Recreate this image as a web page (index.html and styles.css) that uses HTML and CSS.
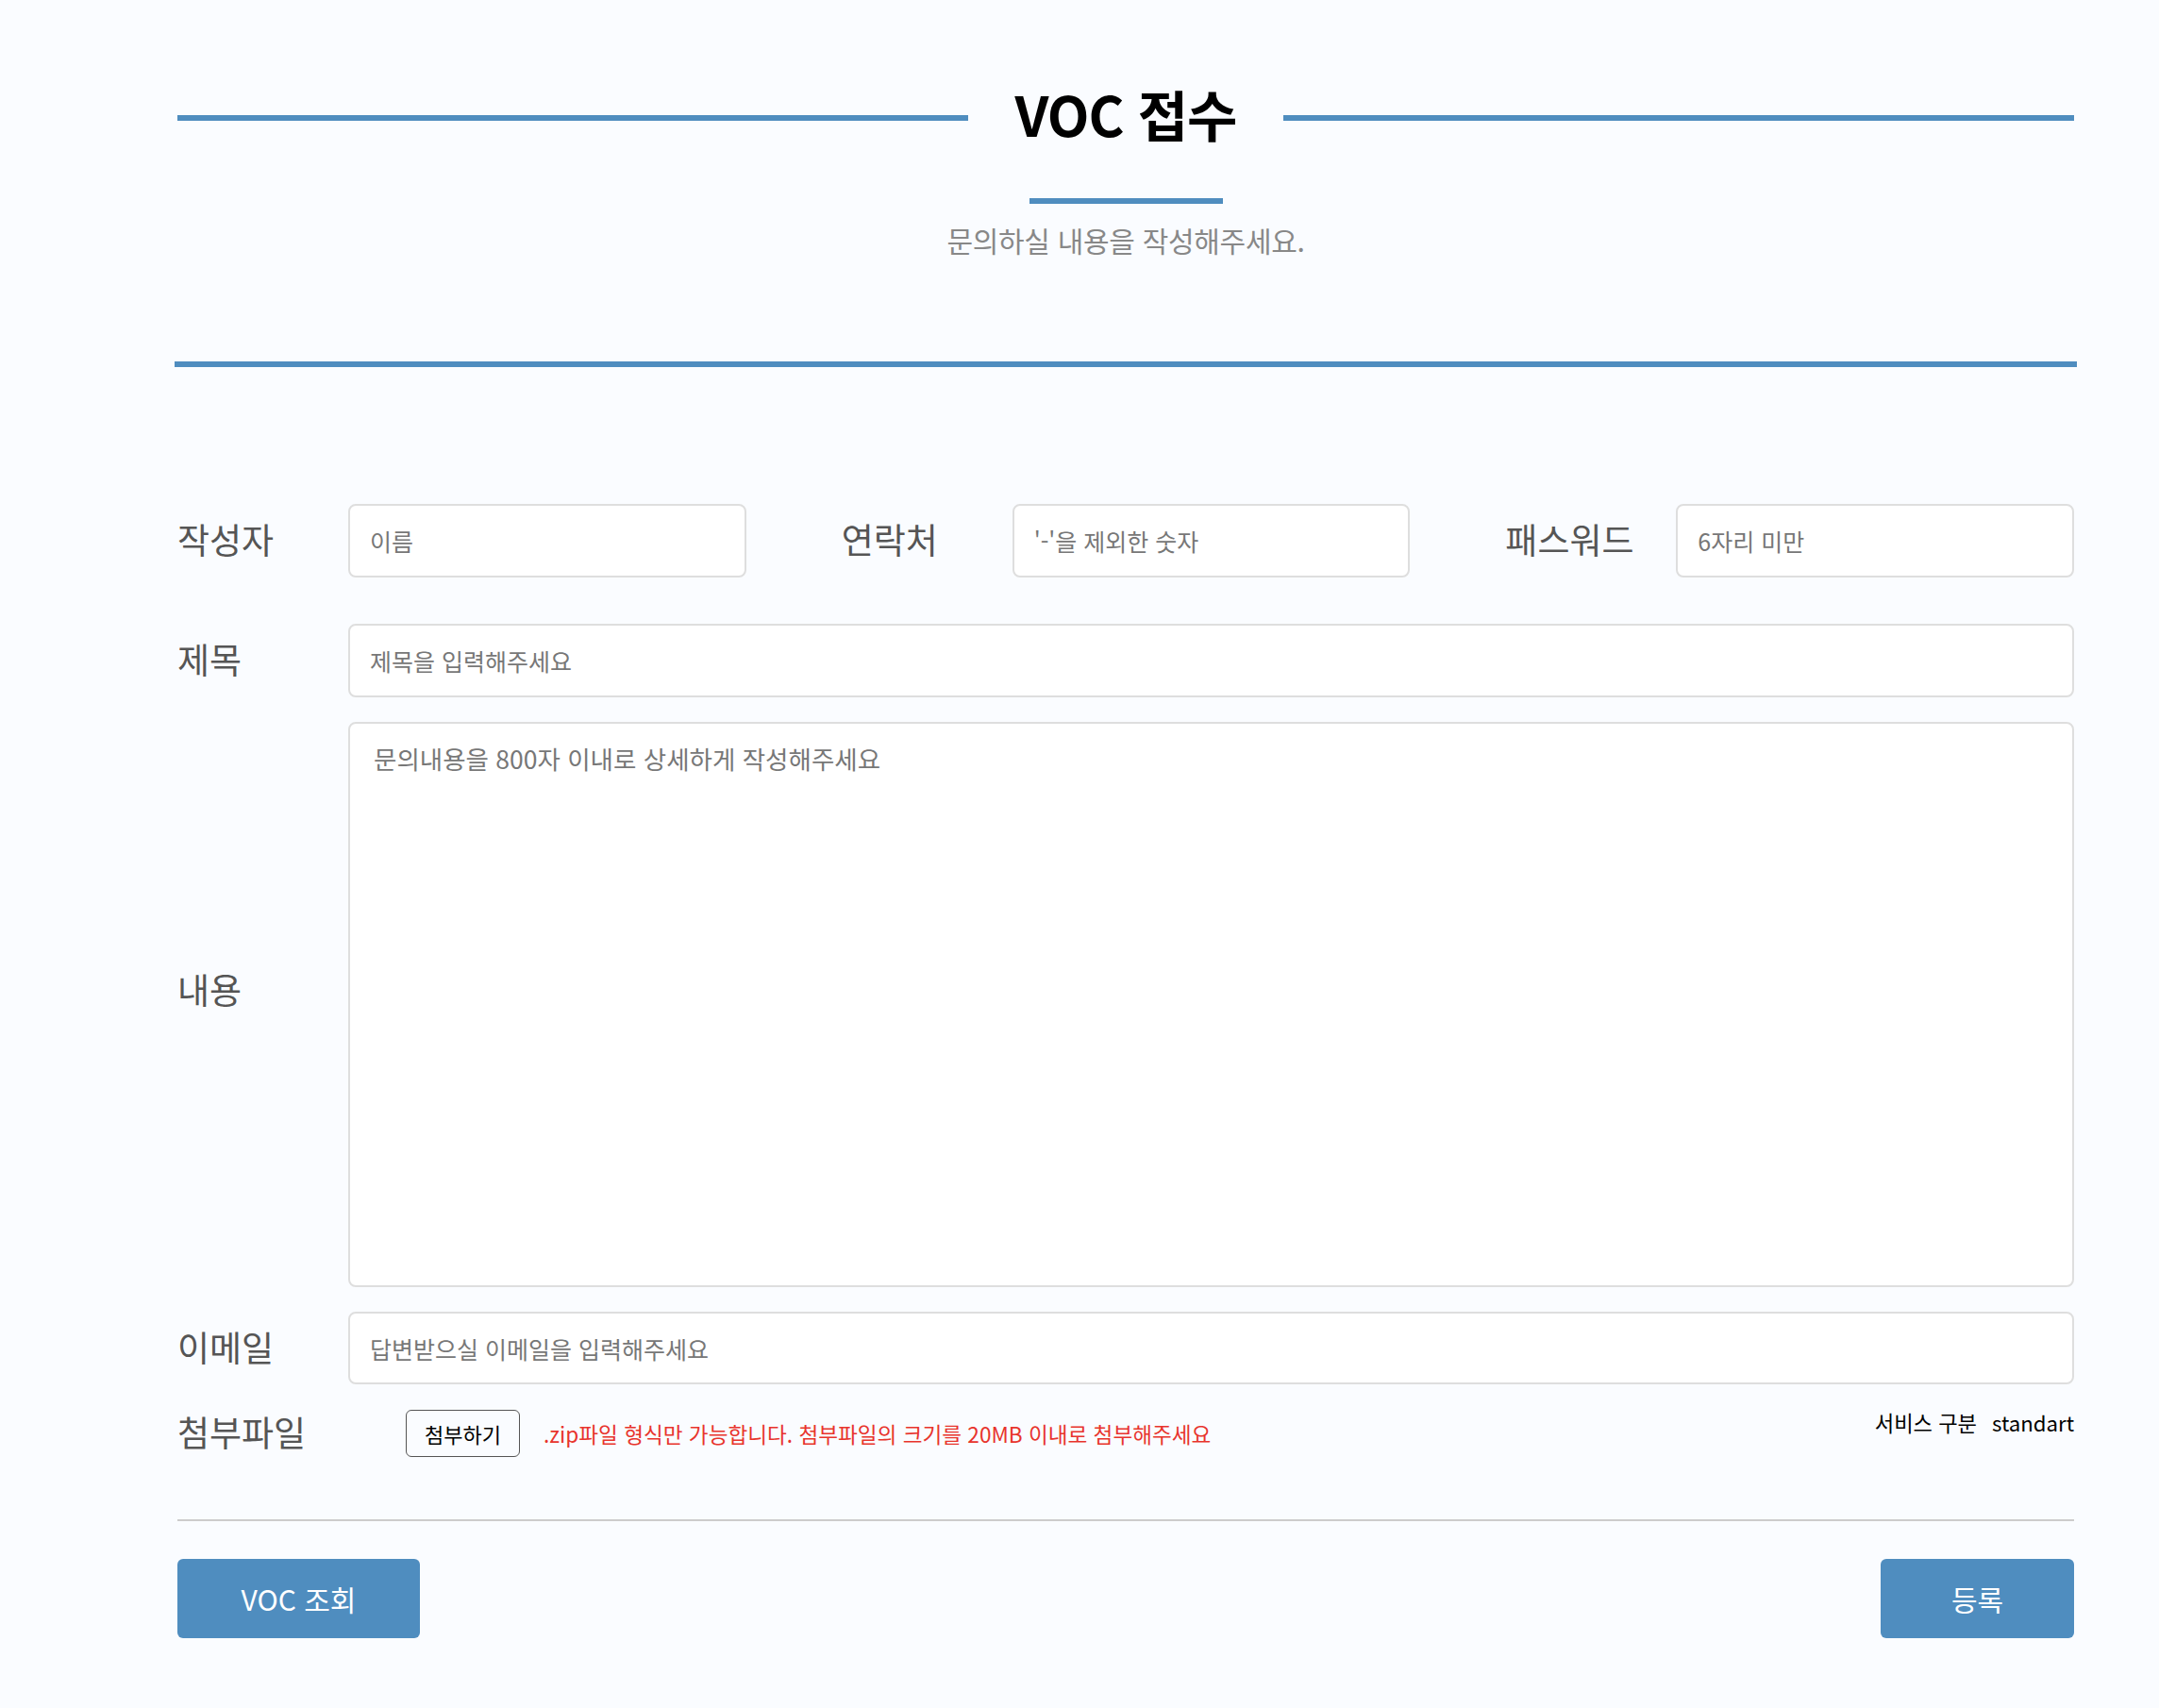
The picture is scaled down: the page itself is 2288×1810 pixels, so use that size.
FILE: index.html
```html
<!DOCTYPE html>
<html lang="ko">
<head>
<meta charset="utf-8">
<title>VOC 접수</title>
<link rel="stylesheet" href="styles.css">
</head>
<body>
<div class="page">
  <header class="head">
    <div class="title-row">
      <span class="title-line"></span>
      <h1 class="title">VOC 접수</h1>
      <span class="title-line"></span>
    </div>
    <div class="short-bar"></div>
    <p class="subtitle">문의하실 내용을 작성해주세요.</p>
    <div class="divider"></div>
  </header>

  <form class="form">
    <div class="row row-three">
      <div class="group">
        <label class="label">작성자</label>
        <input class="field" type="text" placeholder="이름">
      </div>
      <div class="group">
        <label class="label">연락처</label>
        <input class="field" type="text" placeholder="'-'을 제외한 숫자">
      </div>
      <div class="group">
        <label class="label">패스워드</label>
        <input class="field" type="password" placeholder="6자리 미만">
      </div>
    </div>

    <div class="row row-title">
      <label class="label">제목</label>
      <input class="field" type="text" placeholder="제목을 입력해주세요">
    </div>

    <div class="row row-content">
      <label class="label label-content">내용</label>
      <textarea class="area" placeholder="문의내용을 800자 이내로 상세하게 작성해주세요"></textarea>
    </div>

    <div class="row row-email">
      <label class="label">이메일</label>
      <input class="field" type="text" placeholder="답변받으실 이메일을 입력해주세요">
    </div>

    <div class="row row-attach">
      <div class="attach-left">
        <label class="label label-attach">첨부파일</label>
        <button type="button" class="attach-btn">첨부하기</button>
        <span class="attach-note">.zip파일 형식만 가능합니다. 첨부파일의 크기를 20MB 이내로 첨부해주세요</span>
      </div>
      <div class="service">
        <span>서비스 구분</span>
        <span>standart</span>
      </div>
    </div>

    <div class="rule"></div>

    <div class="actions">
      <button type="button" class="btn btn-search">VOC 조회</button>
      <button type="button" class="btn btn-submit">등록</button>
    </div>
  </form>
</div>
</body>
</html>
```

FILE: styles.css
```css
* {
  box-sizing: border-box;
}

html, body {
  margin: 0;
  padding: 0;
  background: #fafcff;
  font-family: "Noto Sans CJK KR", "Noto Sans", sans-serif;
}

.page {
  width: 2010px;
  margin-left: 188px;
  padding-top: 80px;
  padding-bottom: 68px;
}

/* header */
.title-row {
  display: flex;
  align-items: center;
  height: 80px;
}

.title-line {
  flex: 1;
  height: 6px;
  background: #4f8dbf;
  margin-top: 10px;
}

.title {
  margin: 0;
  padding: 0 50px;
  font-size: 58px;
  font-weight: 700;
  line-height: 80px;
  color: #000;
  letter-spacing: -1px;
}

.short-bar {
  width: 205px;
  height: 6px;
  margin: 50px auto 0;
  background: #4f8dbf;
}

.subtitle {
  margin: 18px 0 0;
  text-align: center;
  font-size: 30px;
  line-height: 40px;
  color: #888;
  letter-spacing: -0.3px;
}

.divider {
  height: 6px;
  margin: 109px -3px 0;
  background: #4f8dbf;
}

/* form */
.form {
  margin-top: 145px;
}

.row {
  display: flex;
  align-items: center;
}

.label {
  flex: 0 0 181px;
  font-size: 37px;
  line-height: 44px;
  padding-bottom: 4px;
  color: #555;
}

.row-three {
  gap: 101px;
}

.group {
  flex: 1;
  display: flex;
  align-items: center;
}

.field {
  flex: 1;
  min-width: 0;
  height: 78px;
  padding: 0 21px;
  border: 2px solid #dedede;
  border-radius: 8px;
  background: #fff;
  font-family: inherit;
  font-size: 25px;
  color: #333;
  outline: none;
}

.field::placeholder,
.area::placeholder {
  color: #777;
}

.row-title {
  margin-top: 49px;
}

.row-content {
  margin-top: 26px;
}

.label-content {
  padding-bottom: 34px;
}

.area {
  flex: 1;
  height: 599px;
  padding: 18px 25px;
  border: 2px solid #dedede;
  border-radius: 8px;
  background: #fff;
  font-family: inherit;
  font-size: 26.5px;
  line-height: 38px;
  color: #333;
  resize: none;
  outline: none;
}

.row-email {
  margin-top: 26px;
}

.row-email .field {
  height: 77px;
}

.row-attach {
  margin-top: 27px;
  align-items: flex-start;
  justify-content: space-between;
}

.attach-left {
  display: flex;
  align-items: center;
}

.label-attach {
  flex: 0 0 242px;
}

.attach-btn {
  width: 121px;
  height: 50px;
  padding: 0;
  border: 1.5px solid #555;
  border-radius: 6px;
  background: transparent;
  font-family: inherit;
  font-size: 22px;
  color: #000;
}

.attach-note {
  margin-left: 25px;
  font-size: 22.6px;
  color: #e8342c;
}

.service {
  display: flex;
  gap: 16px;
  font-size: 22.2px;
  line-height: 26px;
  color: #000;
}

.rule {
  height: 2px;
  margin-top: 66px;
  background: #cccccc;
}

.actions {
  display: flex;
  justify-content: space-between;
  margin-top: 40px;
}

.btn {
  height: 84px;
  border: none;
  border-radius: 6px;
  background: #4f8dbf;
  color: #fff;
  font-family: inherit;
  font-size: 30px;
}

.btn-search {
  width: 257px;
}

.btn-submit {
  width: 205px;
}
```
